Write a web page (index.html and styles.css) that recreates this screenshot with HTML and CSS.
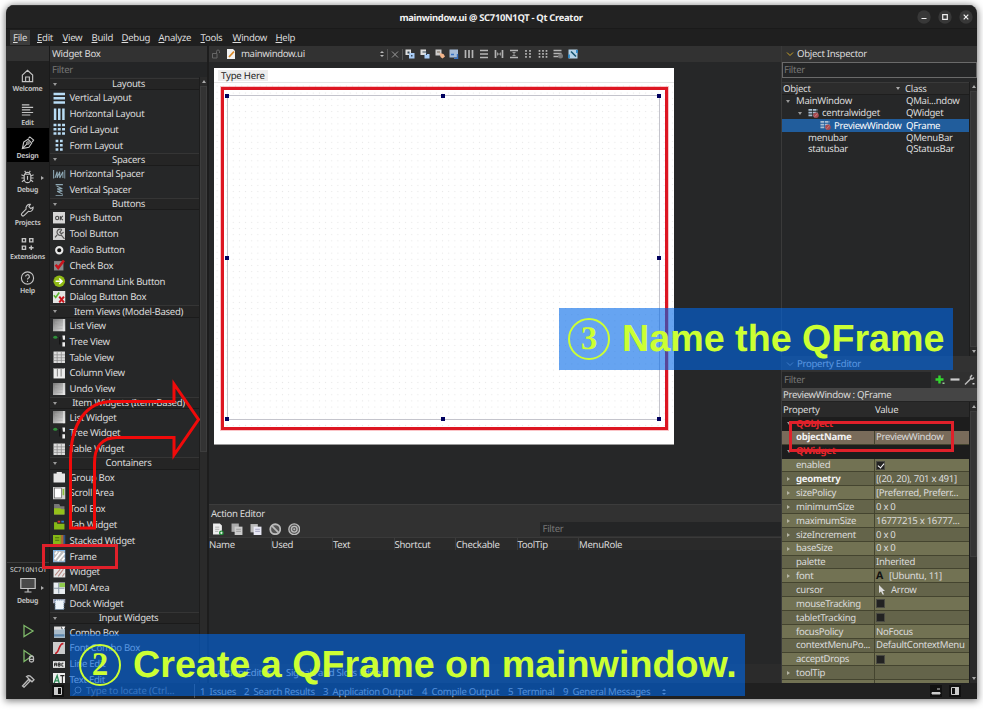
FILE: index.html
```html
<!DOCTYPE html>
<html lang="en">
<head>
    <meta charset="UTF-8">
    <meta name="viewport" content="width=device-width, initial-scale=1.0">
    <title>mainwindow.ui @ SC710N1QT - Qt Creator</title>
    <link rel="stylesheet" href="styles.css">
</head>
<body>
    <!-- icon set -->
    <svg class="defs" width="0" height="0">
        <linearGradient id="gray" x1="0" y1="0" x2="1" y2="1"><stop offset="0" stop-color="#777"/><stop offset=".6" stop-color="#bbb"/><stop offset="1" stop-color="#eee"/></linearGradient>
        <symbol id="i-vl" viewBox="0 0 12 12"><path d="M.5 2h11M.5 6h11M.5 10h11" stroke="#b8dcf5" stroke-width="2.4"/></symbol>
        <symbol id="i-hl" viewBox="0 0 12 12"><path d="M2 .5v11M6 .5v11M10 .5v11" stroke="#b8dcf5" stroke-width="2.4"/></symbol>
        <symbol id="i-grid" viewBox="0 0 12 12"><path d="M.5 2h11M.5 6h11M.5 10h11" stroke="#b8dcf5" stroke-width="2.4" stroke-dasharray="2.8 1.3"/></symbol>
        <symbol id="i-form" viewBox="0 0 12 12"><path d="M2.5 2h7M2.5 6h7M2.5 10h7" stroke="#b8dcf5" stroke-width="2.4" stroke-dasharray="2.6 1.6"/></symbol>
        <symbol id="i-hs" viewBox="0 0 12 12"><path d="M.6 2v8M11.4 2v8" stroke="#8fa9b5"/><path d="M2 9.5l2-6v6l2.500-6v6l3-6v6" stroke="#8fa9b5" fill="none"/></symbol>
        <symbol id="i-vs" viewBox="0 0 12 12"><path d="M2.500.6h7M2.500 11.400h7" stroke="#8fa9b5"/><path d="M3.500 2l5.500 2.500H4l5 2.500H4l5.500 3" stroke="#8fa9b5" fill="none"/></symbol>
        <symbol id="i-push" viewBox="0 0 12 12"><rect width="11.500" height="11" fill="#d8d8d8"/><ellipse cx="4" cy="5.800" rx="1.500" ry="1.700" fill="none" stroke="#444"/><path d="M7 3.800v4M9.500 3.800L7.300 5.800l2.200 2" stroke="#444" fill="none"/></symbol>
        <symbol id="i-tool" viewBox="0 0 12 12"><rect width="11.500" height="11.500" fill="#d2d2d2"/><path d="M8.500 1.500A3 3 0 1 0 8 6.800l3 3.700M8.500 1.500L6.500 4l1.500 1.500 2.200-1.500M4 6.500L2 9" stroke="#555" fill="none" stroke-width="1.100"/></symbol>
        <symbol id="i-radio" viewBox="0 0 12 12"><circle cx="6" cy="6" r="3" fill="#111" stroke="#e8e8e8" stroke-width="2"/></symbol>
        <symbol id="i-check" viewBox="0 0 12 12"><rect x="1" y="2" width="9" height="9" fill="#8a8a8a"/><path d="M2.500 5.500L5 8.500 10.500 1.500" stroke="#c8141c" stroke-width="2.500" fill="none"/></symbol>
        <symbol id="i-cmd" viewBox="0 0 12 12"><circle cx="6" cy="6" r="5.600" fill="#8fb914"/><path d="M2.500 6h6M6 3.300L8.700 6 6 8.700" stroke="#fff" stroke-width="1.500" fill="none"/></symbol>
        <symbol id="i-dlg" viewBox="0 0 12 12"><rect width="12" height="12" fill="#e4e4e4"/><path d="M.8 4l1.800 2.300L6 1.500" stroke="#5bb52c" stroke-width="1.500" fill="none"/><path d="M6 5.500l4.500 5.500M10.500 5.500L6 11" stroke="#c8141c" stroke-width="1.900"/></symbol>
        <symbol id="i-list" viewBox="0 0 12 12"><rect width="12" height="12" fill="url(#gray)"/><path d="M10.500 0v12" stroke="#eee"/><path d="M2 3h7M2 6h7M2 9h7" stroke="#a8a8a8" stroke-width=".6"/></symbol>
        <symbol id="i-tree" viewBox="0 0 12 12"><ellipse cx="2.200" cy="2.200" rx="2" ry="1.500" fill="#2f8f3a"/><path d="M9 .5h2.500v4H9.500zM9 7h2.500v4H9z" fill="#eee"/><path d="M6.500 2v7" stroke="#111"/></symbol>
        <symbol id="i-table" viewBox="0 0 12 12"><rect x=".5" y=".5" width="11" height="11" fill="#ddd"/><path d="M.5 3.700h11M.5 6.500h11M.5 9h11M4 .5v11M8 .5v11" stroke="#888" stroke-width=".7"/></symbol>
        <symbol id="i-col" viewBox="0 0 12 12"><rect x=".5" y="1" width="11" height="10" fill="#ececec"/><path d="M1 1.500h10M4.200 2v7M7.800 2v7" stroke="#888"/></symbol>
        <symbol id="i-group" viewBox="0 0 12 12"><path d="M.5 2.500h3V1h5v1.500h3v8.500H.5z" fill="#e6e6e6"/></symbol>
        <symbol id="i-scroll" viewBox="0 0 12 12"><rect width="12" height="12" fill="#d0d0d0"/><rect x="1.500" y="1" width="6.500" height="9.500" fill="#fff" stroke="#555" stroke-width=".6"/><path d="M10 2v6" stroke="#8bbf3c" stroke-width="1.600"/></symbol>
        <symbol id="i-tbox" viewBox="0 0 12 12"><path d="M1 1h5l1 2h4v8H1z" fill="#777"/><path d="M1 5h6l1 1h3v5H1z" fill="#94c11a"/></symbol>
        <symbol id="i-tab" viewBox="0 0 12 12"><path d="M1 3h3v1.500h7V10H1z" fill="#86b817"/><path d="M4.500 2.500h2.500" stroke="#d33" stroke-width="1.500"/><path d="M8 2.500h2.500" stroke="#37c" stroke-width="1.500"/></symbol>
        <symbol id="i-stack" viewBox="0 0 12 12"><path d="M8 1h4v10H8z" fill="#2b4f8c"/><path d="M7 1h3v9.500H7z" fill="#a86a33"/><path d="M0 1h7.500v8.500H0z" fill="#86b817"/><path d="M2 3.500h4M2 6h4" stroke="#4d6d0c"/></symbol>
        <symbol id="i-frame" viewBox="0 0 12 12"><rect x=".5" y=".5" width="11" height="11" fill="#bdbdbd" stroke="#7eb2e4"/><path d="M1.500 9L7 2M4.500 10.500L11 3M2 4L4 1.500M9 10l2-2.500" stroke="#fff" stroke-width="1.600"/></symbol>
        <symbol id="i-widget" viewBox="0 0 12 12"><rect x=".5" y="1" width="11.500" height="10" fill="#e6e6e6"/><path d="M0 1.500h12" stroke="#7eb2e4" stroke-width="1.500"/><path d="M2 9L7 3M5 10l5-7M9 10l2-3" stroke="#b98a84"/></symbol>
        <symbol id="i-mdi" viewBox="0 0 12 12"><rect x=".5" y=".5" width="11" height="11" fill="#e9eef2"/><rect x="6" y="1" width="5.500" height="4" fill="#8fcb4c"/><path d="M5.500 1v10M1 6h10" stroke="#8b9ba8"/></symbol>
        <symbol id="i-dock" viewBox="0 0 12 12"><path d="M0 1h12v4H0z" fill="#aab"/><rect x="2" y="2" width="8.500" height="9" fill="#edf4fa" stroke="#68a" stroke-dasharray="1 1"/></symbol>
        <symbol id="i-combo" viewBox="0 0 12 12"><rect x="1" y="2.500" width="10.500" height="9" fill="#a9bccb"/><rect x="1" y=".5" width="7" height="3" fill="#ddd"/><path d="M8 .5h4L10 3.500z" fill="#fff"/><path d="M1 9h10" stroke="#5f88ae" stroke-width="2"/></symbol>
        <symbol id="i-font" viewBox="0 0 12 12"><rect width="11.500" height="12" fill="#ccc"/><path d="M2 11C6.500 11 5 1 10 1.500" stroke="#c41c24" stroke-width="1.600" fill="none"/></symbol>
        <symbol id="i-line" viewBox="0 0 12 12"><rect y="3" width="11.500" height="6.500" fill="#e8e8e8"/><path d="M1.500 8V5h2v3M1.500 6.500h2M5 4.800v3h1.800V4.800zM5 6.300h1.800M10 5H8.500v2.800H10" stroke="#222" stroke-width=".9" fill="none"/></symbol>
        <symbol id="i-text" viewBox="0 0 12 12"><rect width="11.500" height="12" fill="#eee"/><path d="M1 10L4 2.500 6 10M2.500 7.500h3" stroke="#2e8a57" stroke-width="1.300" fill="none"/><path d="M7 2.500h4M9 2.500V10" stroke="#222"/></symbol>
        <symbol id="t-brk" viewBox="0 0 12 12"><path d="M.5 2h10M.5 5h10M.5 8h6" stroke="#a9bfd4" stroke-width="2" stroke-dasharray="4 .8"/><circle cx="8.700" cy="8" r="3" fill="#a84a50"/><path d="M6.900 9.800l3.600-3.600" stroke="#d09a9a" stroke-width=".8"/></symbol>
    </svg>

    <div class="window">
        <div class="titlebar">
            <span class="title">mainwindow.ui @ SC710N1QT - Qt Creator</span>
            <div class="win-buttons">
                <svg viewBox="0 0 14 14"><circle cx="7" cy="7" r="6.700"/><path d="M4.500 8.500h5"/></svg>
                <svg viewBox="0 0 14 14"><circle cx="7" cy="7" r="6.700"/><path d="M4.700 4.700h4.600v4.600H4.700z"/></svg>
                <svg viewBox="0 0 14 14"><circle cx="7" cy="7" r="6.700"/><path d="M4.700 4.700l4.600 4.600M9.300 4.700L4.700 9.300"/></svg>
            </div>
        </div>

        <div class="menubar">
            <span class="m-file open"><u>F</u>ile</span>
            <span class="m-edit"><u>E</u>dit</span>
            <span class="m-view"><u>V</u>iew</span>
            <span class="m-build"><u>B</u>uild</span>
            <span class="m-debug"><u>D</u>ebug</span>
            <span class="m-analyze"><u>A</u>nalyze</span>
            <span class="m-tools"><u>T</u>ools</span>
            <span class="m-window"><u>W</u>indow</span>
            <span class="m-help"><u>H</u>elp</span>
        </div>

        <div class="main">
            <!-- mode selector -->
            <div class="modes">
                <div class="modes-top"></div>
                <div class="mode"><svg viewBox="0 0 16 16"><path d="M2.500 7L8 2l5.500 5v7h-11zM6 14V9h4v5"/></svg>Welcome</div>
                <div class="mode"><svg viewBox="0 0 16 16"><path d="M2 2.500h8M2 5.200h12M2 7.900h9M2 10.600h12M2 13.300h9"/></svg>Edit</div>
                <div class="mode active"><svg viewBox="0 0 16 16"><path d="M2.500 14l1.500-7 4.500-3 4 4-3 4.500zM3 13.500l4.500-4.500M9 3l1.500-1.500L14.500 5 13 7"/><circle cx="8.500" cy="8" r="1.300"/></svg>Design</div>
                <div class="mode has-menu"><svg viewBox="0 0 16 16"><path d="M4.500 7a3.500 4 0 0 1 7 0v3a3.500 4 0 0 1-7 0zM5 5h6M8 7v4M1.500 5.500L4.500 7M1.500 9h3M2 13l3-2M14.500 5.500l-3 1.500M14.500 9h-3M14 13l-3-2M6 3L5 1.500M10 3l1-1.500"/></svg>Debug</div>
                <div class="mode"><svg viewBox="0 0 16 16"><path d="M14 5L11.500 6.500 9.500 4.500 11 2A4 4 0 0 0 6.500 7L2 11.500a1.500 1.500 0 0 0 2.500 2.300L9 9.500A4 4 0 0 0 14 5z"/></svg>Projects</div>
                <div class="mode"><svg viewBox="0 0 16 16"><path d="M2.500 2.300h3.400v3.400H2.500zM10.300 2.300h3.400v3.400h-3.400zM2.500 10.300h3.400v3.400H2.500zM12 9.500v5M9.500 12h5" stroke-width="1.500"/></svg>Extensions</div>
                <div class="mode"><svg viewBox="0 0 16 16"><circle cx="8" cy="8" r="6.500"/><path d="M6 6.500a2 2 0 1 1 2.800 1.800Q8 8.700 8 9.700M8 11v1.200"/></svg>Help</div>
                <div class="target">
                    <span class="kit">SC710N1QT</span>
                    <div class="mode has-menu"><svg viewBox="0 0 16 16"><path d="M.8 1.500h14.400v10H.8z" class="screen"/><path d="M8 12v3M4.500 15h7"/></svg>Debug</div>
                    <svg class="run" viewBox="0 0 14 14"><path d="M3 1.500L12 7l-9 5.500z"/></svg>
                    <svg class="run" viewBox="0 0 14 14"><path d="M3 1.500L11 7l-8 5.500z"/><path class="bug" d="M8.500 9a2 2 0 0 1 4 0v2.500a2 1.500 0 0 1-4 0zM8.500 10.300h4"/></svg>
                    <svg class="run build" viewBox="0 0 14 14"><path d="M1.500 12L7.500 5.500 9 7l-6 6.200zM5.500 2.500c2-1.200 4-.5 5 .8l2.500 2.500-2 2L8 5z"/></svg>
                </div>
            </div>

            <div class="content">
                <div class="panels">
                    <!-- widget box -->
                    <div class="widget-box">
                        <div class="panel-title">Widget Box</div>
                        <div class="filter">Filter</div>
                        <div class="widget-scroll">
                            <div class="widgets">
                                <div class="cat">Layouts</div>
                                <div class="item"><svg><use href="#i-vl"/></svg>Vertical Layout</div>
                                <div class="item"><svg><use href="#i-hl"/></svg>Horizontal Layout</div>
                                <div class="item"><svg><use href="#i-grid"/></svg>Grid Layout</div>
                                <div class="item"><svg><use href="#i-form"/></svg>Form Layout</div>
                                <div class="cat">Spacers</div>
                                <div class="item"><svg><use href="#i-hs"/></svg>Horizontal Spacer</div>
                                <div class="item"><svg><use href="#i-vs"/></svg>Vertical Spacer</div>
                                <div class="cat">Buttons</div>
                                <div class="item"><svg><use href="#i-push"/></svg>Push Button</div>
                                <div class="item"><svg><use href="#i-tool"/></svg>Tool Button</div>
                                <div class="item"><svg><use href="#i-radio"/></svg>Radio Button</div>
                                <div class="item"><svg><use href="#i-check"/></svg>Check Box</div>
                                <div class="item"><svg><use href="#i-cmd"/></svg>Command Link Button</div>
                                <div class="item"><svg><use href="#i-dlg"/></svg>Dialog Button Box</div>
                                <div class="cat">Item Views (Model-Based)</div>
                                <div class="item"><svg><use href="#i-list"/></svg>List View</div>
                                <div class="item"><svg><use href="#i-tree"/></svg>Tree View</div>
                                <div class="item"><svg><use href="#i-table"/></svg>Table View</div>
                                <div class="item"><svg><use href="#i-col"/></svg>Column View</div>
                                <div class="item"><svg><use href="#i-list"/></svg>Undo View</div>
                                <div class="cat">Item Widgets (Item-Based)</div>
                                <div class="item"><svg><use href="#i-list"/></svg>List Widget</div>
                                <div class="item"><svg><use href="#i-tree"/></svg>Tree Widget</div>
                                <div class="item"><svg><use href="#i-table"/></svg>Table Widget</div>
                                <div class="cat">Containers</div>
                                <div class="item"><svg><use href="#i-group"/></svg>Group Box</div>
                                <div class="item"><svg><use href="#i-scroll"/></svg>Scroll Area</div>
                                <div class="item"><svg><use href="#i-tbox"/></svg>Tool Box</div>
                                <div class="item"><svg><use href="#i-tab"/></svg>Tab Widget</div>
                                <div class="item"><svg><use href="#i-stack"/></svg>Stacked Widget</div>
                                <div class="item"><svg><use href="#i-frame"/></svg>Frame</div>
                                <div class="item"><svg><use href="#i-widget"/></svg>Widget</div>
                                <div class="item"><svg><use href="#i-mdi"/></svg>MDI Area</div>
                                <div class="item"><svg><use href="#i-dock"/></svg>Dock Widget</div>
                                <div class="cat">Input Widgets</div>
                                <div class="item"><svg><use href="#i-combo"/></svg>Combo Box</div>
                                <div class="item"><svg><use href="#i-font"/></svg>Font Combo Box</div>
                                <div class="item"><svg><use href="#i-line"/></svg>Line Edit</div>
                                <div class="item"><svg><use href="#i-text"/></svg>Text Edit</div>
                            </div>
                            <div class="scrollbar"><i class="up"></i><b></b></div>
                        </div>
                    </div>

                    <!-- form editor -->
                    <div class="editor">
                        <div class="editor-bar">
                            <svg class="lock" viewBox="0 0 10 10"><path d="M1.500 4.500h4.500V9H1.500zM5.500 4V2.500a1.500 1.500 0 0 1 3 0V4"/></svg>
                            <svg class="doc" viewBox="0 0 10 10"><path d="M1 0h6l2 2v8H1z" fill="#f2f2f2"/><path d="M3 8l5-5.500" stroke="#d98a2b" stroke-width="1.800"/></svg>
                            <span class="doc-name">mainwindow.ui</span>
                            <svg class="updown" viewBox="0 0 6 8"><path d="M1 3l2-2 2 2zM1 5l2 2 2-2z"/></svg>
                            <svg class="close" viewBox="0 0 8 8"><path d="M1 1l6 6M7 1L1 7"/></svg>
                            <div class="tools">
                                <svg viewBox="0 0 10 10"><path d="M.5.5h5.500v5.500h-5.500z" fill="#ddd"/><path d="M4 4h5.500v5.500H4z" fill="#a8cbf5"/><path d="M2.500 2.500h2v2h-2zM6 6h1.500v1.500H6z" fill="#345"/></svg>
                                <svg viewBox="0 0 10 10"><path d="M.5.5h5.500v5.500h-5.500z" fill="#ddd"/><path d="M4.500 5h5v4.500h-5z" fill="#a8cbf5"/><path d="M2.500 3h4v3" stroke="#345" fill="none"/></svg>
                                <svg viewBox="0 0 10 10"><path d="M.5.500h6v6h-6z" fill="#ccc"/><path d="M4.500 4l4 1 1.500 2.500L7.500 9.500 5.500 8z" fill="#f2b48a"/><path d="M2 3h3" stroke="#765"/></svg>
                                <svg viewBox="0 0 10 10"><path d="M.5.500h8.500v8h-8.500z" fill="#a6bcd8"/><path d="M2 5.500h3M8.500 5v4.500H5" stroke="#3a74c4" stroke-width="1.400" fill="none"/></svg>
                                <svg viewBox="0 0 10 10"><path d="M1.500 1v8M5 1v8M8.500 1v8" class="t2"/></svg>
                                <svg viewBox="0 0 10 10"><path d="M1 1.500h8M1 5h8M1 8.500h8" class="t2"/></svg>
                                <svg viewBox="0 0 10 10"><path d="M1.500 1v8M8.500 1v8" class="t2"/><path d="M3 3l4 4V3L3 7z" fill="#999"/></svg>
                                <svg viewBox="0 0 10 10"><path d="M1 1.500h8M1 8.500h8" class="t2"/><path d="M3 3l4 4H3l4-4z" fill="#999"/></svg>
                                <svg viewBox="0 0 10 10"><path d="M3 1v8M7 1v8" class="t2 dash"/></svg>
                                <svg viewBox="0 0 10 10"><path d="M1.500 1v8M5 1v8M8.500 1v8" class="t2 dash"/></svg>
                                <svg viewBox="0 0 10 10"><path d="M.5 1.500h8M.5 4.500h8M.5 7.500h5" class="t2"/><circle cx="7.500" cy="7" r="2.500" fill="#777"/></svg>
                                <svg viewBox="0 0 10 10"><path d="M.5.500h9v9h-9z" fill="#b5d3e8"/><path d="M3 2.500l5 5" stroke="#15546f" stroke-width="1.600"/><path d="M1 9V5.500M9 1v3" stroke="#2b88c8" stroke-width="1.800"/></svg>
                            </div>
                        </div>
                        <div class="canvas">
                            <div class="form">
                                <div class="form-menu"><span>Type Here</span></div>
                                <div class="form-body">
                                    <div class="highlight">
                                        <div class="selection">
                                            <i class="h tl"></i><i class="h tc"></i><i class="h tr"></i>
                                            <i class="h ml"></i><i class="h mr"></i>
                                            <i class="h bl"></i><i class="h bc"></i><i class="h br"></i>
                                        </div>
                                    </div>
                                </div>
                            </div>
                        </div>
                        <div class="actions">
                            <div class="actions-title">Action Editor</div>
                            <div class="actions-bar">
                                <svg viewBox="0 0 12 12"><path d="M1 .5h6.500l2 2V11H1z" fill="#eee"/><path d="M3 4h4M3 6h4M3 8h3" stroke="#999" stroke-width=".7"/><circle cx="9" cy="9.500" r="2.300" fill="#1f8a35"/><path d="M7.800 9.500h2.400M9 8.300v2.400" stroke="#fff" stroke-width=".8"/></svg>
                                <svg viewBox="0 0 12 12"><path d="M.5.500h7v8h-7z" fill="#aaa"/><path d="M3.500 3.500h7.500v8H3.500z" fill="#ccc"/><path d="M5 6h4.500M5 8h4.500" stroke="#888" stroke-width=".7"/></svg>
                                <svg viewBox="0 0 12 12"><path d="M.5 1h7v8h-7z" fill="#bbb"/><path d="M3.500 3.500h7.500v8H3.500z" fill="#e8e8f4"/><path d="M5 6h4.500M5 8h4.500" stroke="#88a" stroke-width=".7"/></svg>
                                <svg viewBox="0 0 12 12"><circle cx="6" cy="6" r="4.800" fill="#555" stroke="#bbb" stroke-width="1.700"/><path d="M2.800 2.800l6.400 6.400" stroke="#bbb" stroke-width="1.700"/></svg>
                                <svg viewBox="0 0 12 12"><circle cx="6" cy="6" r="5.200" fill="#555" stroke="#bbb" stroke-width="1.300"/><circle cx="6" cy="6" r="2.700" fill="none" stroke="#bbb" stroke-width="1.300"/><circle cx="6" cy="6" r="1" fill="#bbb"/></svg>
                                <div class="filter">Filter</div>
                            </div>
                            <div class="actions-head">
                                <span>Name</span><span>Used</span><span>Text</span><span>Shortcut</span><span>Checkable</span><span>ToolTip</span><span>MenuRole</span>
                            </div>
                            <div class="actions-body"></div>
                            <div class="actions-tabs"><span>Action Editor</span><span>Signals and Slots Editor</span></div>
                        </div>
                    </div>

                    <!-- object inspector + properties -->
                    <div class="side">
                        <div class="inspector">
                            <div class="panel-title"><svg class="chev" viewBox="0 0 8 8"><path d="M1 2.500l3 3 3-3"/></svg>Object Inspector</div>
                            <div class="filter framed">Filter</div>
                            <div class="tree-wrap">
                                <div class="tree">
                                    <div class="tree-head"><span>Object</span><span>Class</span></div>
                                    <div class="node"><span class="l0 exp">MainWindow</span><span>QMai...ndow</span></div>
                                    <div class="node"><span class="l1 exp"><svg><use href="#t-brk"/></svg>centralwidget</span><span>QWidget</span></div>
                                    <div class="node selected"><span class="l2"><svg><use href="#t-brk"/></svg>PreviewWindow</span><span>QFrame</span></div>
                                    <div class="node short"><span class="l1">menubar</span><span>QMenuBar</span></div>
                                    <div class="node short"><span class="l1">statusbar</span><span>QStatusBar</span></div>
                                </div>
                                <div class="scrollbar"><i class="up"></i><b></b><i class="down"></i></div>
                            </div>
                        </div>
                        <div class="properties">
                            <div class="panel-title"><svg class="chev dim" viewBox="0 0 8 8"><path d="M1 2.500l3 3 3-3"/></svg>Property Editor</div>
                            <div class="prop-filter">
                                <div class="filter">Filter</div>
                                <svg viewBox="0 0 12 12"><path d="M5.500 1.500v8M1.500 5.500h8" stroke="#33d62f" stroke-width="2.400"/><path d="M8.500 8.500h2v1.500h-2z" fill="#9c9"/></svg>
                                <svg viewBox="0 0 12 12"><path d="M1.500 5.500h9" stroke="#ccc" stroke-width="2.200"/></svg>
                                <svg viewBox="0 0 12 12"><path d="M1 10.500L7 4.500M8 1L6.500 3v2h2l1.500-1.500" stroke="#bbb" stroke-width="1.500" fill="none"/><path d="M8.500 9h2v1.500h-2z" fill="#ccc"/></svg>
                            </div>
                            <div class="prop-class">PreviewWindow : QFrame</div>
                            <div class="prop-wrap">
                                <div class="props">
                                    <div class="prop-head"><span>Property</span><span>Value</span></div>
                                    <div class="prop group">QObject</div>
                                    <div class="prop tan"><span><b>objectName</b></span><span>PreviewWindow</span></div>
                                    <div class="prop group">QWidget</div>
                                    <div class="prop"><span>enabled</span><span><i class="box on"></i></span></div>
                                    <div class="prop alt sub"><span><b>geometry</b></span><span>[(20, 20), 701 x 491]</span></div>
                                    <div class="prop sub"><span>sizePolicy</span><span>[Preferred, Preferr...</span></div>
                                    <div class="prop alt sub"><span>minimumSize</span><span>0 x 0</span></div>
                                    <div class="prop sub"><span>maximumSize</span><span>16777215 x 16777...</span></div>
                                    <div class="prop alt sub"><span>sizeIncrement</span><span>0 x 0</span></div>
                                    <div class="prop sub"><span>baseSize</span><span>0 x 0</span></div>
                                    <div class="prop alt"><span>palette</span><span>Inherited</span></div>
                                    <div class="prop sub"><span>font</span><span><em class="glyph">A</em>[Ubuntu, 11]</span></div>
                                    <div class="prop alt"><span>cursor</span><span><svg class="cursor" viewBox="0 0 8 10"><path d="M1 0l6 6H4.500L6 9.500H4.500L3 6.500 1 8z" fill="#ddd"/></svg>Arrow</span></div>
                                    <div class="prop"><span>mouseTracking</span><span><i class="box"></i></span></div>
                                    <div class="prop alt"><span>tabletTracking</span><span><i class="box"></i></span></div>
                                    <div class="prop"><span>focusPolicy</span><span>NoFocus</span></div>
                                    <div class="prop alt"><span>contextMenuPo...</span><span>DefaultContextMenu</span></div>
                                    <div class="prop"><span>acceptDrops</span><span><i class="box"></i></span></div>
                                    <div class="prop alt sub"><span>toolTip</span><span></span></div>
                                    <div class="prop"><span></span><span></span></div>
                                </div>
                                <div class="scrollbar"><i class="up"></i><b></b><i class="down"></i></div>
                            </div>
                        </div>
                    </div>
                </div>

                <div class="statusbar">
                    <svg class="pane" viewBox="0 0 12 12"><path d="M2.500 2.500h7v7h-7z"/><path d="M2.500 2.500h3v7h-3z" class="fill"/></svg>
                    <div class="locator"><svg viewBox="0 0 10 10"><circle cx="6" cy="4" r="3"/><path d="M4 6.500L1 9.500"/></svg>Type to locate (Ctrl...</div>
                    <div class="outputs">
                        <span class="o1">1&nbsp; Issues</span><span class="o2">2&nbsp; Search Results</span><span class="o3">3&nbsp; Application Output</span><span class="o4">4&nbsp; Compile Output</span><span class="o5">5&nbsp; Terminal</span><span class="o9">9&nbsp; General Messages</span>
                        <svg class="updown" viewBox="0 0 6 8"><path d="M1 3l2-2 2 2zM1 5l2 2 2-2z"/></svg>
                    </div>
                    <svg class="pane dark" viewBox="0 0 12 12"><path d="M2 7.500h8v1.500H2z" class="fill"/><path d="M7 4h3"/></svg>
                    <svg class="pane dark last" viewBox="0 0 12 12"><path d="M2.500 2.500h7v7h-7z"/><path d="M6.500 2.500h3v7h-3z" class="fill"/></svg>
                </div>
            </div>
        </div>
    </div>

    <!-- tutorial annotations -->
    <svg class="arrow" viewBox="0 0 140 156"><path d="M10.500 149V82C10.500 42 28 22.500 52 22.500H114V5l24.500 35.500L114 76V58.500H57C42 58.500 34.500 68 34.500 84V149z"/></svg>
    <div class="mark mark-frame"></div>
    <div class="mark mark-name"></div>
    <div class="banner banner-name"><span class="num">3</span><span>Name the QFrame</span></div>
    <div class="banner banner-create"><span class="num">2</span><span>Create a QFrame on mainwindow.</span></div>
</body>
</html>
```
FILE: styles.css
```css
* {
    box-sizing: border-box;
}

body {
    margin: 0;
    width: 983px;
    height: 710px;
    padding: 5px 6px;
    overflow: hidden;
    position: relative;
    background-color: #fff;
    font-family: "Noto Sans", "Open Sans", sans-serif;
    font-size: 9.6px;
    letter-spacing: -0.3px;
    line-height: 1;
    color: #dcdcdc;
    text-rendering: geometricPrecision;
    white-space: nowrap;
}

svg {
    display: block;
    flex: none;
}

.defs {
    position: absolute;
}

/* window */
.window {
    width: 971px;
    height: 694px;
    display: flex;
    flex-direction: column;
    background-color: #222;
    border-radius: 8px 8px 0 0;
    overflow: hidden;
    box-shadow: 0 1px 7px 1px rgba(0, 0, 0, 0.5);
}

.titlebar {
    height: 24px;
    display: flex;
    align-items: center;
    justify-content: center;
    position: relative;
    padding-top: 1px;
    border-bottom: 1px solid #1a1a1a;
    border-top: 1px solid #333;
}

.title {
    font-weight: bold;
    font-size: 9.4px;
    color: #f0f0f0;
    margin-right: 1px;
}

.win-buttons {
    position: absolute;
    right: 4px;
    top: 4px;
    display: flex;
    gap: 7px;
}

.win-buttons svg {
    width: 14px;
    height: 14px;
    fill: none;
    stroke: #eee;
    stroke-width: 1.2;
}

.win-buttons circle {
    fill: #383838;
    stroke: none;
}

.menubar {
    height: 17px;
    display: flex;
    align-items: center;
    padding-left: 4px;
    background-color: #1f1f1f;
}

.menubar span {
    height: 15px;
    line-height: 16px;
    padding-left: 3px;
}

.menubar .open {
    background-color: #3c3c3c;
}

.menubar u {
    text-underline-offset: 1px;
}

.m-file { width: 20px; margin-right: 4px; }
.m-edit { width: 25.5px; }
.m-view { width: 29px; }
.m-build { width: 30px; }
.m-debug { width: 37px; }
.m-analyze { width: 42px; }
.m-tools { width: 32px; }
.m-window { width: 43px; }

.main {
    flex: 1;
    min-height: 0;
    display: flex;
}

/* mode selector */
.modes {
    width: 43px;
    display: flex;
    flex-direction: column;
    background-color: #212121;
    border-left: 1px solid #333;
}

.modes-top {
    height: 15px;
    background-color: #323232;
}

.mode {
    height: 33.6px;
    padding: 7px 1px 0 0;
    display: flex;
    flex-direction: column;
    align-items: center;
    gap: 2px;
    font-size: 7px;
    font-weight: bold;
    color: #bdbdbd;
    position: relative;
}

.mode svg {
    width: 15px;
    height: 16px;
    fill: none;
    stroke: #c4c4c4;
    stroke-width: 1.2;
}

.mode.active {
    background-color: #000;
}

.mode.has-menu::after {
    content: "";
    position: absolute;
    right: 5px;
    top: 14px;
    border: 2px solid transparent;
    border-left: 3px solid #aaa;
    border-right: 0;
}

.target {
    margin-top: auto;
    height: 137px;
    border-top: 1px solid #3c3c3c;
    display: flex;
    flex-direction: column;
    align-items: center;
}

.kit {
    font-size: 6.8px;
    margin-top: 4px;
    width: 36px;
    overflow: hidden;
    letter-spacing: -0.1px;
}

.target .mode {
    width: 42px;
    flex: none;
    height: 36px;
    padding-top: 5px;
    gap: 5px;
    margin-bottom: 16px;
}

.target .mode svg {
    width: 16px;
}

.target .screen {
    fill: #4a4a4a;
}

.run {
    width: 14px;
    height: 14px;
    margin-bottom: 11px;
    fill: none;
    stroke: #7fb96a;
    stroke-width: 1.3;
}

.run .bug,
.build {
    stroke: #bbb;
}

.content {
    flex: 1;
    min-width: 0;
    display: flex;
    flex-direction: column;
}

.panels {
    flex: 1;
    min-height: 0;
    display: flex;
    background-color: #262728;
}

.panel-title {
    height: 16px;
    padding-left: 3px;
    display: flex;
    align-items: center;
    background-color: #323232;
}

.filter {
    height: 16px;
    padding-left: 3px;
    display: flex;
    align-items: center;
    color: #777;
    background-color: #242526;
}

.scrollbar {
    width: 8px;
    display: flex;
    flex-direction: column;
    background-color: #2a2a2a;
    border-left: 1px solid #1d1d1d;
}

.scrollbar i {
    height: 9px;
    display: flex;
    align-items: center;
    justify-content: center;
}

.scrollbar i::before {
    content: "";
    border: 2.5px solid transparent;
}

.scrollbar .up::before {
    border-top: 0;
    border-bottom: 3px solid #aaa;
}

.scrollbar .down::before {
    border-bottom: 0;
    border-top: 3px solid #aaa;
}

.scrollbar b {
    background-color: #333;
    border: 1px solid #3d3d3d;
}

/* widget box */
.widget-box {
    width: 160px;
    display: flex;
    flex-direction: column;
    border-left: 1px solid #1a1a1a;
    border-right: 2px solid #1d1d1d;
}

.widget-box .panel-title,
.widget-box .filter {
    padding-left: 2px;
}

.widget-box .filter {
    height: 15px;
}

.widget-scroll {
    flex: 1;
    min-height: 0;
    display: flex;
}

.widgets {
    flex: 1;
    overflow: hidden;
    padding-top: 0.5px;
}

.cat {
    height: 12.7px;
    padding-left: 8px;
    display: flex;
    align-items: center;
    justify-content: center;
    position: relative;
    border-top: 1px solid #353535;
    border-bottom: 1px solid #1b1b1b;
    background-color: #252525;
}

.cat::before,
.exp::before {
    content: "";
    position: absolute;
    left: 3px;
    top: 4px;
    border: 2.5px solid transparent;
    border-top: 3px solid #999;
    border-bottom: 0;
}

.item {
    height: 15.8px;
    display: flex;
    align-items: center;
    gap: 4px;
    padding-left: 3px;
}

.item svg {
    width: 12.5px;
    height: 12.5px;
}

.widget-scroll .scrollbar b {
    height: 366px;
}

/* form editor */
.editor {
    width: 572px;
    display: flex;
    flex-direction: column;
}

.editor-bar {
    height: 16px;
    display: flex;
    align-items: center;
    background-color: #323232;
}

.lock {
    width: 10px;
    height: 10px;
    margin-left: 2px;
    fill: none;
    stroke: #666;
}

.doc {
    width: 10px;
    height: 10px;
    margin: 0 5px 0 5px;
}

.doc-name {
    width: 138px;
    letter-spacing: -0.35px;
}

.updown {
    width: 6px;
    height: 8px;
    fill: #bbb;
}

.close {
    width: 16px;
    height: 11px;
    padding: 1px 3px;
    margin-left: 2px;
    border-left: 1px solid #555;
    border-right: 1px solid #555;
    fill: none;
    stroke: #999;
}

.tools {
    display: flex;
    gap: 4.8px;
    margin-left: 2px;
}

.tools svg {
    width: 10px;
    height: 10px;
}

.t2 {
    stroke: #b5b5b5;
    stroke-width: 1.7;
}

.dash {
    stroke-dasharray: 1.8 1.2;
}

.canvas {
    height: 442px;
    padding: 6px 0 0 5px;
}

.form {
    width: 460px;
    height: 377px;
    background-color: #fff;
    border: 1px solid #999;
    border-width: 0 0 1px 0;
}

.form-menu {
    height: 15px;
    padding: 2px 4px;
    border-bottom: 1px solid #e4e4e4;
}

.form-menu span {
    display: inline-block;
    padding: 1px 3px;
    height: 11px;
    background-color: #ededed;
    color: #222;
    letter-spacing: -0.2px;
}

.form-body {
    height: 330px;
    padding: 4px 7px;
    background-image: radial-gradient(circle, #e8e8e8 0.7px, transparent 0.9px);
    background-size: 6.16px 6.16px;
}

.highlight {
    height: 343px;
    width: 447px;
    padding: 5px 3px;
    border: 3px solid #dd1622;
    outline: 1px solid rgba(240, 60, 70, 0.3);
    background: #fff radial-gradient(circle, #e6e6e6 0.7px, transparent 0.9px);
    background-size: 6.16px 6.16px;
}

.selection {
    width: 433px;
    height: 325px;
    border: 1px solid #c4c4cc;
    position: relative;
}

.h {
    position: absolute;
    width: 4px;
    height: 4px;
    background-color: #00005e;
}

.tl, .tc, .tr { top: -2px; }
.ml, .mr { top: 160px; }
.bl, .bc, .br { bottom: -2px; }
.tl, .ml, .bl { left: -3px; }
.tc, .bc { left: 213px; }
.tr, .mr, .br { right: -2px; }

/* action editor */
.actions {
    flex: 1;
    display: flex;
    flex-direction: column;
    border-top: 1px solid #3c3c3c;
    background-color: #313131;
}

.actions-title {
    height: 16px;
    line-height: 18px;
    padding-left: 2px;
}

.actions-bar {
    height: 16px;
    display: flex;
    align-items: center;
    gap: 6.4px;
    padding-left: 3px;
}

.actions-bar svg {
    width: 12.5px;
    height: 12.5px;
}

.actions-bar .filter {
    flex: 1;
    height: 14px;
    padding-left: 2px;
    margin-left: 234px;
}

.actions-head {
    height: 13px;
    display: grid;
    grid-template-columns: repeat(6, 61.5px) 1fr;
    background-color: #2a2a2a;
    border-top: 1px solid #3a3a3a;
    line-height: 13px;
}

.actions-head span + span {
    border-left: 1px solid #3b3b3b;
}

.actions-body {
    flex: 1;
    background-color: #262728;
}

.actions-tabs {
    height: 19px;
    display: flex;
    gap: 15px;
    padding: 4px 8px;
    background-color: #2b2b2b;
}

/* right side */
.side {
    flex: 1;
    min-width: 0;
    display: flex;
    flex-direction: column;
    border-left: 1px solid #3a3a3a;
}

.inspector {
    height: 310px;
    display: flex;
    flex-direction: column;
}

.chev {
    width: 8px;
    height: 8px;
    margin: 0 3px 0 1px;
    fill: none;
    stroke: #c9a227;
}

.chev.dim {
    stroke: #999;
}

.framed {
    padding-left: 1px;
    border: 1px solid #6a6a6a;
}

.tree-wrap {
    flex: 1;
    display: flex;
    margin-top: 4px;
}

.tree {
    flex: 1;
}

.tree-head,
.node {
    display: grid;
    grid-template-columns: 122px 1fr;
    align-items: center;
}

.tree-head {
    height: 13px;
    padding-left: 1px;
    background-color: #2c2c2c;
    border-top: 1px solid #3a3a3a;
    border-bottom: 1px solid #1e1e1e;
    position: relative;
}

.tree-head::after {
    content: "";
    position: absolute;
    left: 114px;
    top: 4px;
    border: 2.5px solid transparent;
    border-top: 3px solid #aaa;
    border-bottom: 0;
}

.node {
    height: 12.2px;
    padding-left: 1px;
}

.node > span {
    display: flex;
    align-items: center;
    position: relative;
    padding-left: 1px;
}

.node.short {
    height: 11.6px;
}

.node .l0 { padding-left: 13px; }
.node .l1 { padding-left: 25px; }
.node .l2 { padding-left: 37px; }
.l1.exp::before { left: 15px; }

.node svg {
    width: 11px;
    height: 11px;
    margin-right: 3px;
}

.selected {
    background-color: #215d9c;
    color: #fff;
}

.inspector .scrollbar b {
    flex: 1;
}

.properties .scrollbar b {
    height: 146px;
    margin-bottom: auto;
}

.properties {
    flex: 1;
    min-height: 0;
    display: flex;
    flex-direction: column;
}

.prop-filter {
    height: 16px;
    display: flex;
    align-items: center;
    gap: 3px;
    background-color: #303030;
}

.prop-filter .filter {
    width: 149px;
    padding-left: 2px;
}

.prop-filter svg {
    width: 12px;
    height: 12px;
}

.prop-class {
    height: 14px;
    line-height: 14px;
    padding-left: 1px;
    background-color: #454545;
    border-bottom: 1px solid #222;
}

.prop-wrap {
    flex: 1;
    min-height: 0;
    display: flex;
}

.props {
    flex: 1;
    overflow: hidden;
}

.prop-head,
.prop {
    display: grid;
    grid-template-columns: 92px 1fr;
    align-items: center;
}

.prop-head {
    height: 15px;
    padding-left: 1px;
    background-color: #2a2a2a;
}

.prop {
    height: 13.87px;
    background-color: #727253;
    border-bottom: 1px solid #44442f;
    position: relative;
}

.prop.alt {
    background-color: #64644a;
}

.prop.tan {
    background-color: #796b5a;
}

.prop.group {
    padding-left: 14px;
    background-color: #1d1d1d;
    border-color: #1d1d1d;
    color: #e8252b;
    font-weight: bold;
}

.prop > span {
    height: 100%;
    display: flex;
    align-items: center;
    padding-left: 14px;
}

.prop > span + span {
    padding-left: 1px;
    border-left: 1px solid #44442f;
}

.prop b {
    color: #f2f2f2;
}

.sub::before,
.group::before {
    content: "";
    position: absolute;
    left: 5px;
    top: 5px;
    border: 2px solid transparent;
    border-left: 3px solid #b5b5a5;
    border-right: 0;
}

.group::before {
    border: 2.5px solid transparent;
    border-top: 3px solid #999;
    border-bottom: 0;
}

.box {
    width: 7px;
    height: 7px;
    margin-left: 1px;
    background-color: #222;
    outline: 1px solid #4a4a42;
}

.box.on::after {
    content: "";
    display: block;
    width: 3px;
    height: 5px;
    margin: 0 0 0 2px;
    border: solid #fff;
    border-width: 0 1.3px 1.3px 0;
    transform: rotate(40deg);
}

.glyph {
    width: 13px;
    font-style: normal;
    font-weight: bold;
    font-size: 10.5px;
    color: #111;
}

.cursor {
    width: 8px;
    height: 10px;
    margin: 0 5px 0 2px;
}

/* status bar */
.statusbar {
    height: 16px;
    display: flex;
    align-items: center;
    background-color: #202020;
}

.pane {
    width: 12px;
    height: 12px;
    margin-left: 3px;
    fill: none;
    stroke: #ccc;
    background-color: #111;
}

.pane .fill {
    fill: #ccc;
}

.locator {
    width: 123px;
    height: 14px;
    margin-left: 8px;
    display: flex;
    align-items: center;
    gap: 4px;
    color: #888;
    letter-spacing: -0.15px;
    border-right: 1px solid #555;
}

.locator svg {
    width: 10px;
    height: 10px;
    fill: none;
    stroke: #888;
}

.outputs {
    flex: 1;
    display: flex;
    align-items: center;
    padding: 1px 0 0 5px;
    color: #c8c8c8;
}

.o1 { width: 44px; }
.o2 { width: 79px; }
.o3 { width: 99px; }
.o4 { width: 86px; }
.o5 { width: 55px; }
.o9 { width: 98px; }

.last {
    margin: 0 16px 0 7px;
}

/* annotations */
.arrow {
    position: absolute;
    left: 60px;
    top: 379px;
    width: 140px;
    height: 156px;
    fill: none;
    stroke: #f00a0a;
    stroke-width: 3;
}

.mark {
    position: absolute;
    border: 3px solid #e0202a;
}

.mark-frame {
    left: 42px;
    top: 544px;
    width: 76px;
    height: 25px;
}

.mark-name {
    left: 789px;
    top: 421px;
    width: 165px;
    height: 31px;
}

.banner {
    position: absolute;
    height: 62px;
    display: flex;
    align-items: center;
    background-color: rgba(0, 104, 232, 0.6);
    color: #ccff33;
    font-family: "Liberation Sans", Arial, sans-serif;
    font-weight: bold;
    font-size: 37.7px;
    letter-spacing: 0;
}

.num {
    width: 42px;
    height: 42px;
    margin: 0 12px 0 9px;
    border: 2px solid #ccff33;
    border-radius: 50%;
    text-align: center;
    font-family: "Liberation Serif", serif;
    font-size: 33px;
    line-height: 38px;
}

.banner-name {
    left: 559px;
    top: 308px;
    width: 394px;
}

.banner-create {
    left: 70px;
    top: 634px;
    width: 675px;
}
```
